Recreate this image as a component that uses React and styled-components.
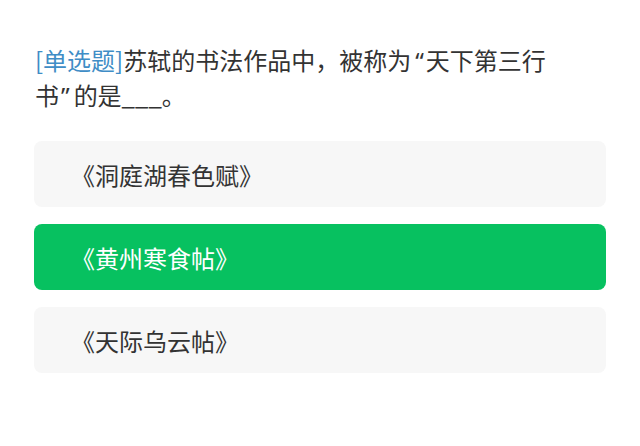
import styled, { createGlobalStyle } from 'styled-components';

const GlobalStyle = createGlobalStyle`
	html, body {
		margin: 0;
		padding: 0;
		background: #ffffff;
	}
	body {
		font-family: 'Noto Sans CJK SC', 'Noto Sans', sans-serif;
	}
`;

const Page = styled.div`
	width: 640px;
	height: 446px;
	padding: 42px 34px 0 34px;
	box-sizing: border-box;
`;
const Question = styled.p`
	margin: 0 0 29px 1px;
	width: 530px;
	font-size: 24px;
	line-height: 35px;
	color: #333333;
`;
const Tag = styled.span`
	color: #3f8dc6;
`;
// narrow curly quotes, as in the reference
const Quote = styled.span`
	font-family: 'Noto Sans', sans-serif;
	line-height: 0;
	margin: ${(props) => (props.open ? '0 2px 0 4px' : '0 4px 0 2px')};
`;
const Options = styled.div`
	display: flex;
	flex-direction: column;
	gap: 17px;
`;
const Option = styled.div`
	height: 66px;
	display: flex;
	align-items: center;
	padding-left: 37px;
	border-radius: 8px;
	font-size: 24px;
	color: ${(props) => (props.selected ? '#ffffff' : '#333333')};
	background-color: ${(props) => (props.selected ? '#07c160' : '#f7f7f7')};
`;

const options = ['《洞庭湖春色赋》', '《黄州寒食帖》', '《天际乌云帖》'];

const App = () => {
	return (
		<Page>
			<GlobalStyle />
			<Question>
				<Tag>[单选题]</Tag>苏轼的书法作品中，被称为<Quote open>“</Quote>天下第三行书<Quote>”</Quote>的是___。
			</Question>
			<Options>
				{options.map((text, i) => (
					<Option key={text} selected={i === 1}>
						{text}
					</Option>
				))}
			</Options>
		</Page>
	);
};

export default App;
